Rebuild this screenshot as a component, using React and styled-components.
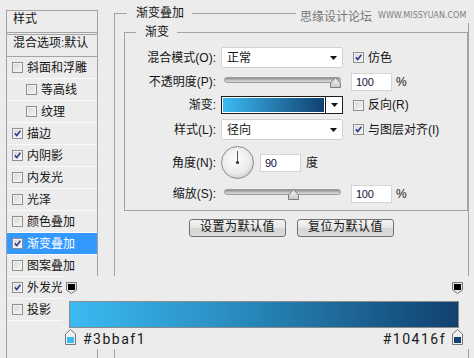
import React from 'react'
import styled, { createGlobalStyle } from 'styled-components'

const GlobalStyle = createGlobalStyle`
  html, body {
    margin: 0;
    padding: 0;
    background: #ececec;
  }
  body {
    width: 474px;
    height: 358px;
    overflow: hidden;
    font-family: "Liberation Sans", "Noto Sans CJK SC", sans-serif;
    font-size: 12px;
    color: #141414;
  }
`

const Dialog = styled.div`
  position: relative;
  display: flex;
  width: 474px;
  height: 358px;
  overflow: hidden;
  background: #ececec;
`

// left column: list of layer styles
const StyleList = styled.div`
  flex-shrink: 0;
  margin: 10px 0 0 6px;
  width: 92px;
  height: 420px;
  box-sizing: border-box;
  border: 1px solid #a3a3a3;
  border-bottom: none;
`

const ListHeader = styled.div`
  height: 22px;
  box-sizing: border-box;
  padding: 1px 0 0 6px;
  line-height: 14px;
  border-bottom: 1px solid #a3a3a3;
`

const BlendHeader = styled(ListHeader)`
  margin-top: 1px;
  height: 23px;
  border-top: 1px solid #a3a3a3;
`

const LayerRow = styled.div`
  display: flex;
  align-items: center;
  gap: 4px;
  height: 22px;
  box-sizing: border-box;
  padding-left: ${p => (p.$indent ? 19 : 5)}px;
  border-bottom: 1px solid #fbfbfb;
  line-height: 14px;
  background: ${p => (p.$active ? '#3399ff' : 'transparent')};
  color: ${p => (p.$active ? '#fff' : 'inherit')};
  white-space: nowrap;
`

const CheckBox = styled.span`
  display: inline-flex;
  align-items: center;
  justify-content: center;
  flex-shrink: 0;
  width: 11px;
  height: 11px;
  box-sizing: border-box;
  border: 1px solid #8e8f8f;
  background: linear-gradient(135deg, #d6d6d6 0%, #f6f6f6 100%);
  box-shadow: inset 0 0 0 1px #f4f4f4;
`

function Check({ on }) {
  return (
    <CheckBox>
      {on && (
        <svg width="7" height="7" viewBox="0 0 7 7">
          <path d="M0.8 3.4 L2.8 5.6 L6.4 0.8" fill="none" stroke="#2b3c8f" strokeWidth="1.6" />
        </svg>
      )}
    </CheckBox>
  )
}

// right side: group boxes
const Settings = styled.div`
  margin-left: 16px;
  width: 355px;
`

const Group = styled.fieldset`
  margin: ${p => p.$m || 0};
  padding: ${p => p.$pad || 0};
  min-width: 0;
  border: 1px solid #a3a3a3;
`

const Legend = styled.legend`
  margin-left: ${p => p.$offset}px;
  padding: 0 8px 0 9px;
  line-height: 14px;
  font-size: 12px;
`

const Form = styled.div`
  display: flex;
  flex-direction: column;
  gap: 5px;
  padding: 8px 0 8px 0;
`

const Row = styled.div`
  display: flex;
  align-items: center;
  height: ${p => p.$h}px;
`

const Label = styled.span`
  flex-shrink: 0;
  width: 91px;
  margin-right: 5px;
  text-align: right;
  line-height: 14px;
  white-space: nowrap;
`

const Select = styled.div`
  display: flex;
  align-items: center;
  justify-content: space-between;
  width: 122px;
  height: 21px;
  box-sizing: border-box;
  padding: 0 5px;
  border: 1px solid #d2d2d2;
  border-radius: 2px;
  background: #fff;
  line-height: 14px;
`

const Arrow = () => (
  <svg width="7" height="4" viewBox="0 0 7 4">
    <path d="M0 0 H7 L3.5 4 Z" fill="#111" />
  </svg>
)

const Extra = styled.div`
  display: flex;
  align-items: center;
  gap: 4px;
  margin-left: 10px;
  line-height: 14px;
  white-space: nowrap;
`

const Slider = styled.div`
  position: relative;
  width: 117px;
  height: 18px;
  margin-left: 3px;
`

const Track = styled.div`
  margin-top: 4px;
  height: 6px;
  box-sizing: border-box;
  border: 1px solid #9c9c9c;
  border-radius: 3px;
  background: linear-gradient(#8d8d8d, #c4c4c4 60%, #dedede);
`

const Thumb = styled.svg`
  position: absolute;
  top: 4px;
`

function RangeSlider({ value }) {
  return (
    <Slider>
      <Track />
      <Thumb width="11" height="11" viewBox="0 0 11 11" style={{ left: Math.round(value * 106) }}>
        <defs>
          <linearGradient id="thumbFill" x1="0" y1="0" x2="0" y2="1">
            <stop offset="0" stopColor="#f4f4f4" />
            <stop offset="1" stopColor="#c9c9c9" />
          </linearGradient>
        </defs>
        <path d="M0.5 10.5 V6 L5.5 0.8 L10.5 6 V10.5 Z" fill="url(#thumbFill)" stroke="#7d7d7d" />
      </Thumb>
    </Slider>
  )
}

const NumberField = styled.div`
  flex-shrink: 0;
  width: 41px;
  height: 18px;
  box-sizing: border-box;
  margin-left: ${p => p.$ml}px;
  padding-left: 4px;
  border: 1px solid #d4d4d4;
  background: #fff;
  font-family: "Liberation Sans", sans-serif;
  font-size: 11px;
  line-height: 16px;
  letter-spacing: -0.3px;
  color: #101040;
`

const Unit = styled.span`
  margin-left: ${p => p.$ml || 4}px;
  line-height: 14px;
`

const GradientPicker = styled.div`
  display: flex;
  width: 122px;
  height: 18px;
  box-sizing: border-box;
  border: 1px solid #1c1c1c;
  background: #fff;
`

const GradientFill = styled.div`
  flex: 1;
  margin: 1px;
  background: linear-gradient(to right, #3bbaf1, #10416f);
`

const PickerArrow = styled.div`
  display: flex;
  align-items: center;
  justify-content: center;
  width: 16px;
  border-left: 1px solid #1c1c1c;
`

const DialFace = styled.svg`
  flex-shrink: 0;
`

function Dial() {
  return (
    <DialFace width="33" height="33" viewBox="0 0 33 33">
      <defs>
        <radialGradient id="dialFill" cx="0.45" cy="0.4" r="0.6">
          <stop offset="0" stopColor="#ffffff" />
          <stop offset="0.75" stopColor="#eaeaea" />
          <stop offset="1" stopColor="#d2d2d2" />
        </radialGradient>
      </defs>
      <circle cx="16.5" cy="16.5" r="16" fill="url(#dialFill)" stroke="#8a8a8a" />
      <line x1="16.5" y1="16.5" x2="16.5" y2="5" stroke="#5a5a5a" strokeWidth="1" />
      <circle cx="16.5" cy="16.5" r="1.6" fill="#333" />
    </DialFace>
  )
}

const ButtonRow = styled.div`
  display: flex;
  justify-content: center;
  gap: 11px;
  margin-top: 8px;
`

const Button = styled.div`
  width: 97px;
  height: 18px;
  box-sizing: border-box;
  border: 1px solid #707070;
  border-radius: 3px;
  background: linear-gradient(#f4f4f4, #e6e6e6 50%, #d6d6d6 51%, #dcdcdc);
  text-align: center;
  line-height: 15px;
  letter-spacing: 0.5px;
`

// watermark over the top border
const Watermark = styled.div`
  position: absolute;
  top: 7px;
  left: 296px;
  right: 0;
  display: flex;
  align-items: center;
  gap: 6px;
  padding-left: 4px;
  height: 16px;
  background: #ececec;
  color: #777;
  white-space: nowrap;
`

const WatermarkUrl = styled.span`
  font-family: "DejaVu Sans", sans-serif;
  font-size: 8px;
  color: #808080;
`

// gradient editor strip laid over the bottom of the dialog
const GradientEditor = styled.div`
  position: absolute;
  left: 62px;
  top: 276px;
  width: 412px;
  height: 73px;
  background: #ececec;
`

const StopRow = styled.div`
  display: flex;
  align-items: center;
  justify-content: space-between;
  height: ${p => p.$h}px;
  margin: ${p => p.$m};
`

const Bar = styled.div`
  height: 27px;
  margin: 7px 15px 0 7px;
  box-sizing: border-box;
  border: 1px solid #8a8a8a;
  background: linear-gradient(to right, #3bbaf1, #2a8fc2 40%, #10416f);
`

const HexText = styled.span`
  flex: ${p => (p.$grow ? 1 : 'none')};
  margin: 3px 6px 0 7px;
  text-align: ${p => (p.$grow ? 'right' : 'left')};
  font-family: Roboto, "Liberation Sans", sans-serif;
  font-size: 14px;
  line-height: 14px;
  letter-spacing: 1.5px;
  color: #1a1a1a;
`

function OpacityStop() {
  return (
    <svg width="11" height="12" viewBox="0 0 11 12">
      <path d="M0.5 0.5 H10.5 V8 L5.5 11.5 L0.5 8 Z" fill="#e6e6e6" stroke="#767676" />
      <rect x="2" y="2" width="7" height="6" fill="#000" />
    </svg>
  )
}

function ColorStop({ color }) {
  return (
    <svg width="11" height="16" viewBox="0 0 11 16">
      <path d="M0.5 15.5 V5 L5.5 0.5 L10.5 5 V15.5 Z" fill="#efefef" stroke="#767676" />
      <rect x="2" y="8" width="7" height="6" fill={color} />
    </svg>
  )
}

const layers = [
  { name: '斜面和浮雕' },
  { name: '等高线', indent: true },
  { name: '纹理', indent: true },
  { name: '描边', checked: true },
  { name: '内阴影', checked: true },
  { name: '内发光' },
  { name: '光泽' },
  { name: '颜色叠加' },
  { name: '渐变叠加', checked: true, active: true },
  { name: '图案叠加' },
  { name: '外发光', checked: true },
  { name: '投影' },
]

export default function App() {
  return (
    <Dialog>
      <GlobalStyle />
      <StyleList>
        <ListHeader>样式</ListHeader>
        <BlendHeader>混合选项:默认</BlendHeader>
        {layers.map(l => (
          <LayerRow key={l.name} $indent={l.indent} $active={l.active}>
            <Check on={l.checked} />
            {l.name}
          </LayerRow>
        ))}
      </StyleList>

      <Settings>
        <Group $m="6px 0 0 0">
          <Legend $offset={12}>渐变叠加</Legend>
          <Group $m="5px 0 0 9px">
            <Legend $offset={11}>渐变</Legend>
            <Form>
              <Row $h={21}>
                <Label>混合模式(O):</Label>
                <Select>正常<Arrow /></Select>
                <Extra><Check on />仿色</Extra>
              </Row>
              <Row $h={18}>
                <Label>不透明度(P):</Label>
                <RangeSlider value={1} />
                <NumberField $ml={10}>100</NumberField>
                <Unit>%</Unit>
              </Row>
              <Row $h={18}>
                <Label>渐变:</Label>
                <GradientPicker>
                  <GradientFill />
                  <PickerArrow><Arrow /></PickerArrow>
                </GradientPicker>
                <Extra><Check />反向(R)</Extra>
              </Row>
              <Row $h={21}>
                <Label>样式(L):</Label>
                <Select>径向<Arrow /></Select>
                <Extra><Check on />与图层对齐(I)</Extra>
              </Row>
              <Row $h={35}>
                <Label>角度(N):</Label>
                <Dial />
                <NumberField $ml={6}>90</NumberField>
                <Unit $ml={5}>度</Unit>
              </Row>
              <Row $h={17}>
                <Label>缩放(S):</Label>
                <RangeSlider value={0.6} />
                <NumberField $ml={10}>100</NumberField>
                <Unit>%</Unit>
              </Row>
            </Form>
          </Group>
          <ButtonRow>
            <Button>设置为默认值</Button>
            <Button>复位为默认值</Button>
          </ButtonRow>
          <div style={{ height: 200 }} />
        </Group>
      </Settings>

      <Watermark>
        思缘设计论坛
        <WatermarkUrl>WWW.MISSYUAN.COM</WatermarkUrl>
      </Watermark>

      <GradientEditor>
        <StopRow $h={12} $m="6px 11px 0 4px">
          <OpacityStop />
          <OpacityStop />
        </StopRow>
        <Bar />
        <StopRow $h={16} $m="1px 11px 0 3px">
          <ColorStop color="#3bbaf1" />
          <HexText>#3bbaf1</HexText>
          <HexText $grow>#10416f</HexText>
          <ColorStop color="#10416f" />
        </StopRow>
      </GradientEditor>
    </Dialog>
  )
}
